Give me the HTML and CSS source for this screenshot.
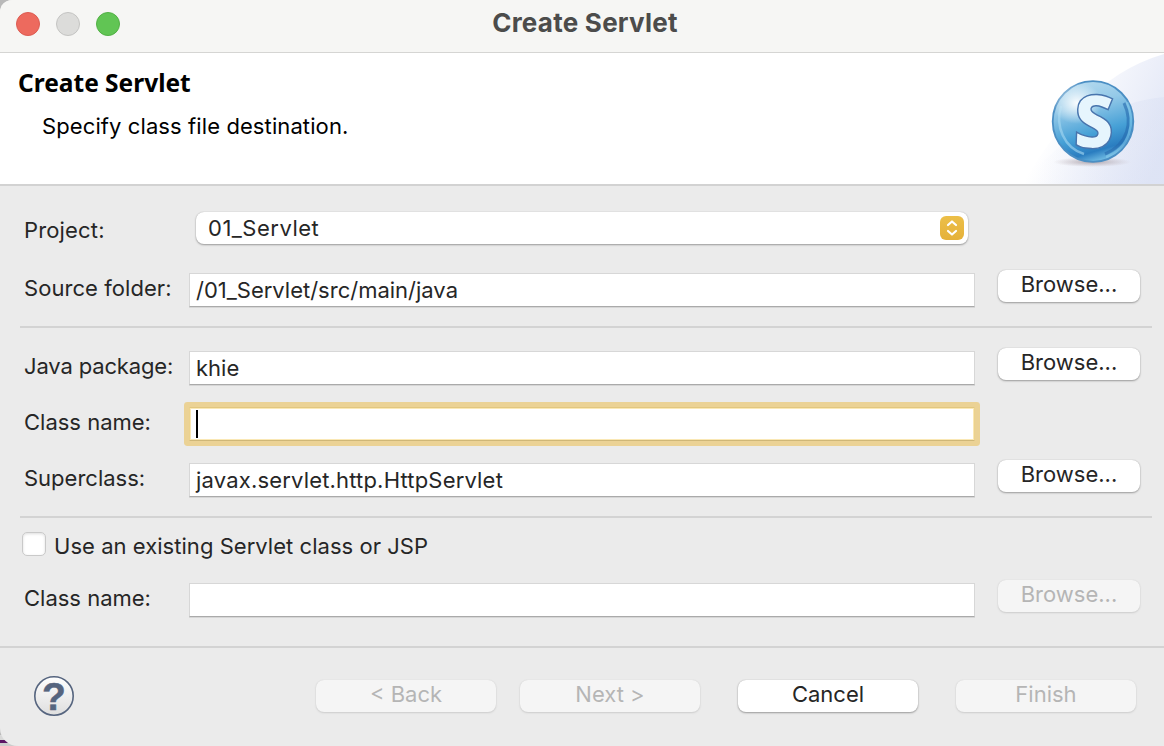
FILE: index.html
```html
<!DOCTYPE html>
<html lang="en">
<head>
<meta charset="utf-8">
<title>Create Servlet</title>
<link rel="stylesheet" href="styles.css">
</head>
<body>
<div class="window">
  <div class="titlebar">
    <div class="lights"><i class="light close"></i><i class="light minimize"></i><i class="light zoom"></i></div>
    <span class="window-title">Create Servlet</span>
  </div>
  <header class="banner">
    <div class="banner-text">
      <h1>Create Servlet</h1>
      <p>Specify class file destination.</p>
    </div>
    <svg class="banner-art" width="164" height="131" viewBox="0 0 164 131">
      <defs>
        <linearGradient id="sweep" x1="0" y1="0.3" x2="1" y2="0.7"><stop offset="0.25" stop-color="#dfe4f6" stop-opacity="0"/><stop offset="1" stop-color="#e2e7f6"/></linearGradient>
        <linearGradient id="sweep2" x1="0" y1="0" x2="1" y2="0"><stop offset="0.1" stop-color="#d5ddf3" stop-opacity="0"/><stop offset="1" stop-color="#d7def3"/></linearGradient>
        <linearGradient id="ball" x1="0.3" y1="0" x2="0.6" y2="1"><stop offset="0" stop-color="#b5daef"/><stop offset="0.3" stop-color="#94c9e8"/><stop offset="0.65" stop-color="#46a0d6"/><stop offset="0.86" stop-color="#2a7dc0"/><stop offset="1" stop-color="#7ac4e8"/></linearGradient>
        <radialGradient id="shine"><stop offset="0" stop-color="#fff" stop-opacity="0.95"/><stop offset="1" stop-color="#fff" stop-opacity="0"/></radialGradient>
        <radialGradient id="shade"><stop offset="0" stop-color="#9b8e96" stop-opacity="0.75"/><stop offset="1" stop-color="#b5a8ad" stop-opacity="0"/></radialGradient>
      </defs>
      <path d="M22 131C56 76 98 20 164 1V131Z" fill="url(#sweep)"/>
      <path d="M22 131C70 78 110 49 164 44V131Z" fill="url(#sweep2)" opacity="0.4"/>
      <ellipse cx="92" cy="109" rx="39" ry="5" fill="url(#shade)"/>
      <circle cx="93" cy="68.500" r="40.300" fill="url(#ball)" stroke="#4b8fc4" stroke-width="1.800"/>
      <path d="M61 53C55 73 64 95 84 101" fill="none" stroke="#a6d8f1" stroke-width="2.500" opacity="0.6"/>
      <path d="M124 50C133 69 128 91 105 101" fill="none" stroke="#2669ad" stroke-width="3" opacity="0.6"/>
      <path d="M127 49C136 70 130 95 106 104" fill="none" stroke="#8ed0ee" stroke-width="2.500" opacity="0.5"/>
      <ellipse cx="77" cy="50" rx="25" ry="21" fill="url(#shine)"/>
      <text class="logo-letter" x="0" y="0" text-anchor="middle" transform="translate(93 95) rotate(2) scale(0.94 1)">S</text>
    </svg>
  </header>

  <main class="form">
    <section class="group first">
      <div class="row project-row">
        <label class="t-project">Project:</label>
        <div class="select"><span class="t-select">01_Servlet</span>
          <svg width="24" height="24" viewBox="0 0 24 24"><defs><linearGradient id="gold" x1="0" y1="0" x2="0" y2="1"><stop offset="0" stop-color="#ecbf48"/><stop offset="1" stop-color="#e5b13a"/></linearGradient></defs><rect width="24" height="24" rx="6" fill="url(#gold)"/><path d="M8 9L12 5.500L16 9M8 15L12 18.500L16 15" fill="none" stroke="#fff" stroke-width="2.200" stroke-linecap="round" stroke-linejoin="round"/></svg>
        </div>
      </div>
      <div class="row"><label class="t-source">Source folder:</label><div class="field"><span class="t-path">/01_Servlet/src/main/java</span></div><button class="btn browse">Browse...</button></div>
    </section>
    <section class="group second">
      <div class="row"><label class="t-java">Java package:</label><div class="field"><span>khie</span></div><button class="btn browse">Browse...</button></div>
      <div class="row"><label>Class name:</label><div class="field focused"><i class="caret"></i></div></div>
      <div class="row"><label>Superclass:</label><div class="field"><span class="t-super">javax.servlet.http.HttpServlet</span></div><button class="btn browse">Browse...</button></div>
    </section>
    <section class="group third">
      <div class="check-row"><i class="checkbox"></i><span class="t-check">Use an existing Servlet class or JSP</span></div>
      <div class="row"><label>Class name:</label><div class="field"></div><button class="btn browse disabled">Browse...</button></div>
    </section>
  </main>

  <footer class="footer">
    <svg class="help" width="40" height="40" viewBox="0 0 40 40"><defs><linearGradient id="helpfill" x1="0" y1="0" x2="0" y2="1"><stop offset="0" stop-color="#fff"/><stop offset="1" stop-color="#dedede"/></linearGradient></defs><circle cx="20" cy="20" r="19.200" fill="url(#helpfill)" stroke="#56657f" stroke-width="1.600"/><text class="help-mark" x="20" y="33.500" text-anchor="middle">?</text></svg>
    <button class="btn disabled">&lt; Back</button>
    <button class="btn disabled next">Next &gt;</button>
    <button class="btn cancel">Cancel</button>
    <button class="btn disabled finish">Finish</button>
  </footer>
</div>
</body>
</html>
```
FILE: styles.css
```css
* { box-sizing: border-box; }
body {
  margin: 0;
  width: 1164px;
  height: 746px;
  overflow: hidden;
  background: linear-gradient(#b9b9b9 0 735px, #d8d8d8 735px 740px, #5c1464 740px 743px, #ccc 743px);
  font: 22px/28px Inter, sans-serif;
  color: #262626;
}
.window {
  display: flex;
  flex-direction: column;
  height: 746px;
  background: #ebebeb;
  border-radius: 12px 0 0 18px;
  overflow: hidden;
}
.titlebar {
  display: grid;
  grid-template-columns: 1fr auto 1fr;
  height: 53px;
  padding: 9px 0 0 16px;
  background: #f6f6f4;
  border-bottom: 1px solid #d5d5d3;
}
.lights { display: flex; gap: 16px; padding-top: 3px; }
.light { width: 24px; height: 24px; border-radius: 50%; border: 1px solid; }
.close { background: #ed6a5e; border-color: #dc5c52; }
.minimize { background: #dcdcda; border-color: #c4c4c2; }
.zoom { background: #61c554; border-color: #52b045; }
.window-title {
  grid-column: 2;
  margin-right: 10px;
  font-size: 26px;
  font-weight: 700;
  letter-spacing: .25px;
  color: #4c4c4b;
}
.banner {
  display: flex;
  justify-content: space-between;
  height: 133px;
  background: #fff;
  border-bottom: 2px solid #d2d2d2;
  color: #000;
}
.banner-text { padding: 16px 0 0 18px; }
.banner h1 { margin: 0; font: 700 24.5px/28px "Noto Sans", sans-serif; }
.banner p { margin: 15px 0 0 24px; letter-spacing: .1px; }
.logo-letter { font: 800 74px "Open Sans", sans-serif; fill: #e6f5fd; stroke: #4874ad; stroke-width: 1.5px; }

.form { height: 460px; }
.group { margin: 0 12px 0 20px; padding-left: 4px; display: flex; flex-direction: column; }
.first { height: 142px; padding-top: 25px; gap: 28px; border-bottom: 2px solid #d3d3d3; }
.second { height: 190px; padding-top: 23px; gap: 22px; border-bottom: 2px solid #d3d3d3; }
.third { padding-top: 14px; }
.row { display: flex; height: 34px; }
.row label { width: 165px; flex: none; padding-top: 1px; white-space: nowrap; }
.project-row label { width: 172px; padding-top: 5px; }
.t-project { letter-spacing: .15px; }
.t-source { letter-spacing: .06px; }
.t-select { letter-spacing: .5px; }
.t-java { letter-spacing: -.15px; }
.t-super { letter-spacing: .18px; }
.t-check { letter-spacing: .04px; }
.select {
  display: flex;
  justify-content: space-between;
  width: 772px;
  padding: 2px 4px 0 12px;
  background: #fff;
  border-radius: 8px;
  box-shadow: 0 0 1px #aaa, 0 1px 2px #999;
}
.select svg { margin-top: 2px; }
.project-row .select { height: 32px; margin-top: 1px; }
.field {
  width: 786px;
  height: 34px;
  padding: 2px 6px;
  background: #fff;
  border: 1px solid #d7d7d7;
  border-bottom: 1px solid #aaa;
  box-shadow: 0 1px 0 #d6d6d6;
  flex: none;
}
.focused { border-color: #e2c77f #ecd28d #cfb778; box-shadow: inset 0 0 0 1px #fae8b5, 0 0 0 5px #ebd295; border-radius: 1px; }
.caret { display: block; width: 2px; height: 28px; background: #000; }
.btn {
  width: 180px;
  height: 32px;
  padding: 0 0 4px;
  border: 0;
  border-radius: 8px;
  background: #fff;
  box-shadow: 0 0 1px #aaa, 0 1px 2px #999;
  font: 22px/28px Inter, sans-serif;
  color: #262626;
  flex: none;
}
.browse { width: 142px; margin: -3px 0 0 23px; }
.disabled { background: #f5f5f5; color: #b5b5b5; box-shadow: 0 0 1px #ccc, 0 1px 2px #ccc; }
.check-row { display: flex; height: 51px; gap: 8px; margin-left: -2px; }
.checkbox { width: 24px; height: 24px; background: #fff; border: 1px solid #c9c9c9; border-radius: 5px; box-shadow: inset 0 1px 3px #ddd; }
.footer { display: flex; height: 100px; padding: 32px 28px 0 34px; border-top: 2px solid #d3d3d3; }
.help { margin: -4px 242px 0 0; }
.help-mark { font: 700 39px "Liberation Sans", sans-serif; fill: #56657f; stroke: #56657f; stroke-width: .5px; }
.next { margin-left: 24px; }
.cancel, .finish { margin-left: 38px; }
```
